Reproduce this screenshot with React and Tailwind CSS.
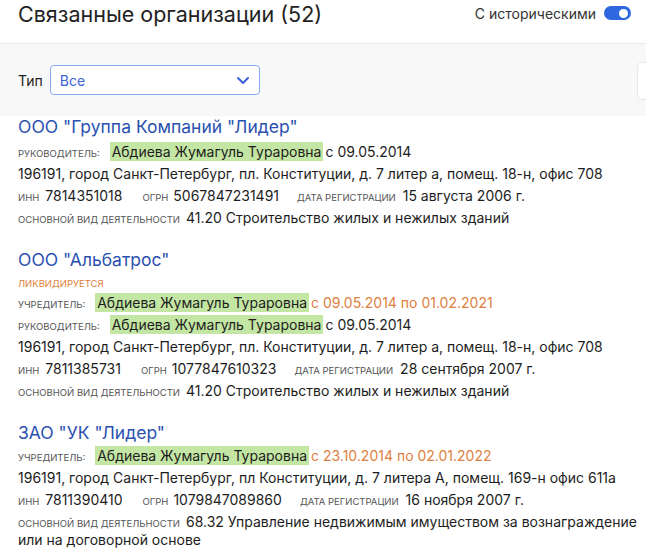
import React from "react";

const Label = ({ children, className = "" }) => (
  <span className={"text-[9.5px] uppercase text-[#555] " + className}>{children}</span>
);

const Person = () => (
  <span className="bg-[#c4e6a4] px-[2px] py-[1px] text-[#1d1d1d]">Абдиева Жумагуль Тураровна</span>
);

function Row({ children, className = "" }) {
  return <div className={"flex items-baseline h-[22px] leading-[22px] whitespace-nowrap " + className}>{children}</div>;
}

function Ids({ inn, ogrn, date }) {
  return (
    <Row>
      <Label>ИНН</Label>
      <span className="ml-[6px]">{inn}</span>
      <Label className="ml-[20px]">ОГРН</Label>
      <span className="ml-[5px]">{ogrn}</span>
      <Label className="ml-[18px]">Дата регистрации</Label>
      <span className="ml-[7px]">{date}</span>
    </Row>
  );
}

function Activity({ children }) {
  return (
    <div className="leading-[16px] pt-[3px]">
      <Label>Основной вид деятельности</Label>
      <span className="ml-[6px]">{children}</span>
    </div>
  );
}

const Title = ({ children }) => (
  <div className="text-[17.5px] leading-[22px] text-[#2b51b0]">{children}</div>
);

export default function App() {
  return (
    <div className="w-[646px] h-[551px] overflow-hidden bg-white text-[14px] text-[#1d1d1d]" style={{ fontFamily: "Inter, 'Noto Sans', sans-serif" }}>
      <div className="h-[44px] flex justify-between pl-[18px] pr-[15px] border-b border-[#ebebeb]">
        <h1 className="text-[21.5px] leading-[26px] pt-[1px] text-[#222]">Связанные организации (52)</h1>
        <div className="flex items-center h-[26px] gap-[8px]">
          <span className="text-[14px] text-[#333]">С историческими</span>
          <span className="w-[27px] h-[14px] rounded-full bg-[#2e67e0] flex items-center justify-end pr-[3px]">
            <span className="w-[9px] h-[9px] rounded-full bg-white"></span>
          </span>
        </div>
      </div>
      <div className="h-[72px] bg-[#f8f8f8] flex items-center pl-[18px] relative">
        <span className="text-[14px] text-[#222] mr-[7px]">Тип</span>
        <div className="w-[210px] h-[30px] rounded-[4px] border border-[#86a9f0] bg-white flex items-center justify-between pl-[9px] pr-[9px]">
          <span className="text-[#3a63d8] text-[14px]">Все</span>
          <svg width="14" height="9" viewBox="0 0 14 9" fill="none">
            <path d="M2 2 L7 7 L12 2" stroke="#3a5fd8" strokeWidth="2" strokeLinecap="round" strokeLinejoin="round" />
          </svg>
        </div>
        <div className="absolute left-[637px] top-[18px] w-[40px] h-[38px] bg-white border border-[#e6e6e6] rounded-[5px]"></div>
      </div>

      <div className="pl-[18px] pr-[4px]">
        <div>
          <Title>ООО "Группа Компаний "Лидер"</Title>
          <Row className="mt-[3px]">
            <Label>Руководитель:</Label>
            <span className="ml-[10px]"><Person /></span>
            <span className="ml-[2px]">с 09.05.2014</span>
          </Row>
          <Row>196191, город Санкт-Петербург, пл. Конституции, д. 7 литер а, помещ. 18-н, офис 708</Row>
          <Ids inn="7814351018" ogrn="5067847231491" date="15 августа 2006 г." />
          <Activity>41.20 Строительство жилых и нежилых зданий</Activity>
        </div>

        <div className="pt-[21px]">
          <Title>ООО "Альбатрос"</Title>
          <div className="text-[9.5px] uppercase text-[#e07f3c] leading-[16px] mt-[5px]">Ликвидируется</div>
          <Row>
            <Label>Учредитель:</Label>
            <span className="ml-[10px]"><Person /></span>
            <span className="ml-[2px] text-[#dd8040]">с 09.05.2014 по 01.02.2021</span>
          </Row>
          <Row>
            <Label>Руководитель:</Label>
            <span className="ml-[10px]"><Person /></span>
            <span className="ml-[2px]">с 09.05.2014</span>
          </Row>
          <Row>196191, город Санкт-Петербург, пл. Конституции, д. 7 литер а, помещ. 18-н, офис 708</Row>
          <Ids inn="7811385731" ogrn="1077847610323" date="28 сентября 2007 г." />
          <Activity>41.20 Строительство жилых и нежилых зданий</Activity>
        </div>

        <div className="pt-[21px]">
          <Title>ЗАО "УК "Лидер"</Title>
          <Row className="mt-[1px]">
            <Label>Учредитель:</Label>
            <span className="ml-[10px]"><Person /></span>
            <span className="ml-[2px] text-[#dd8040]">с 23.10.2014 по 02.01.2022</span>
          </Row>
          <Row>196191, город Санкт-Петербург, пл Конституции, д. 7 литера А, помещ. 169-н офис 611а</Row>
          <Ids inn="7811390410" ogrn="1079847089860" date="16 ноября 2007 г." />
          <Activity>68.32 Управление недвижимым имуществом за вознаграждение или на договорной основе</Activity>
        </div>
      </div>
    </div>
  );
}
